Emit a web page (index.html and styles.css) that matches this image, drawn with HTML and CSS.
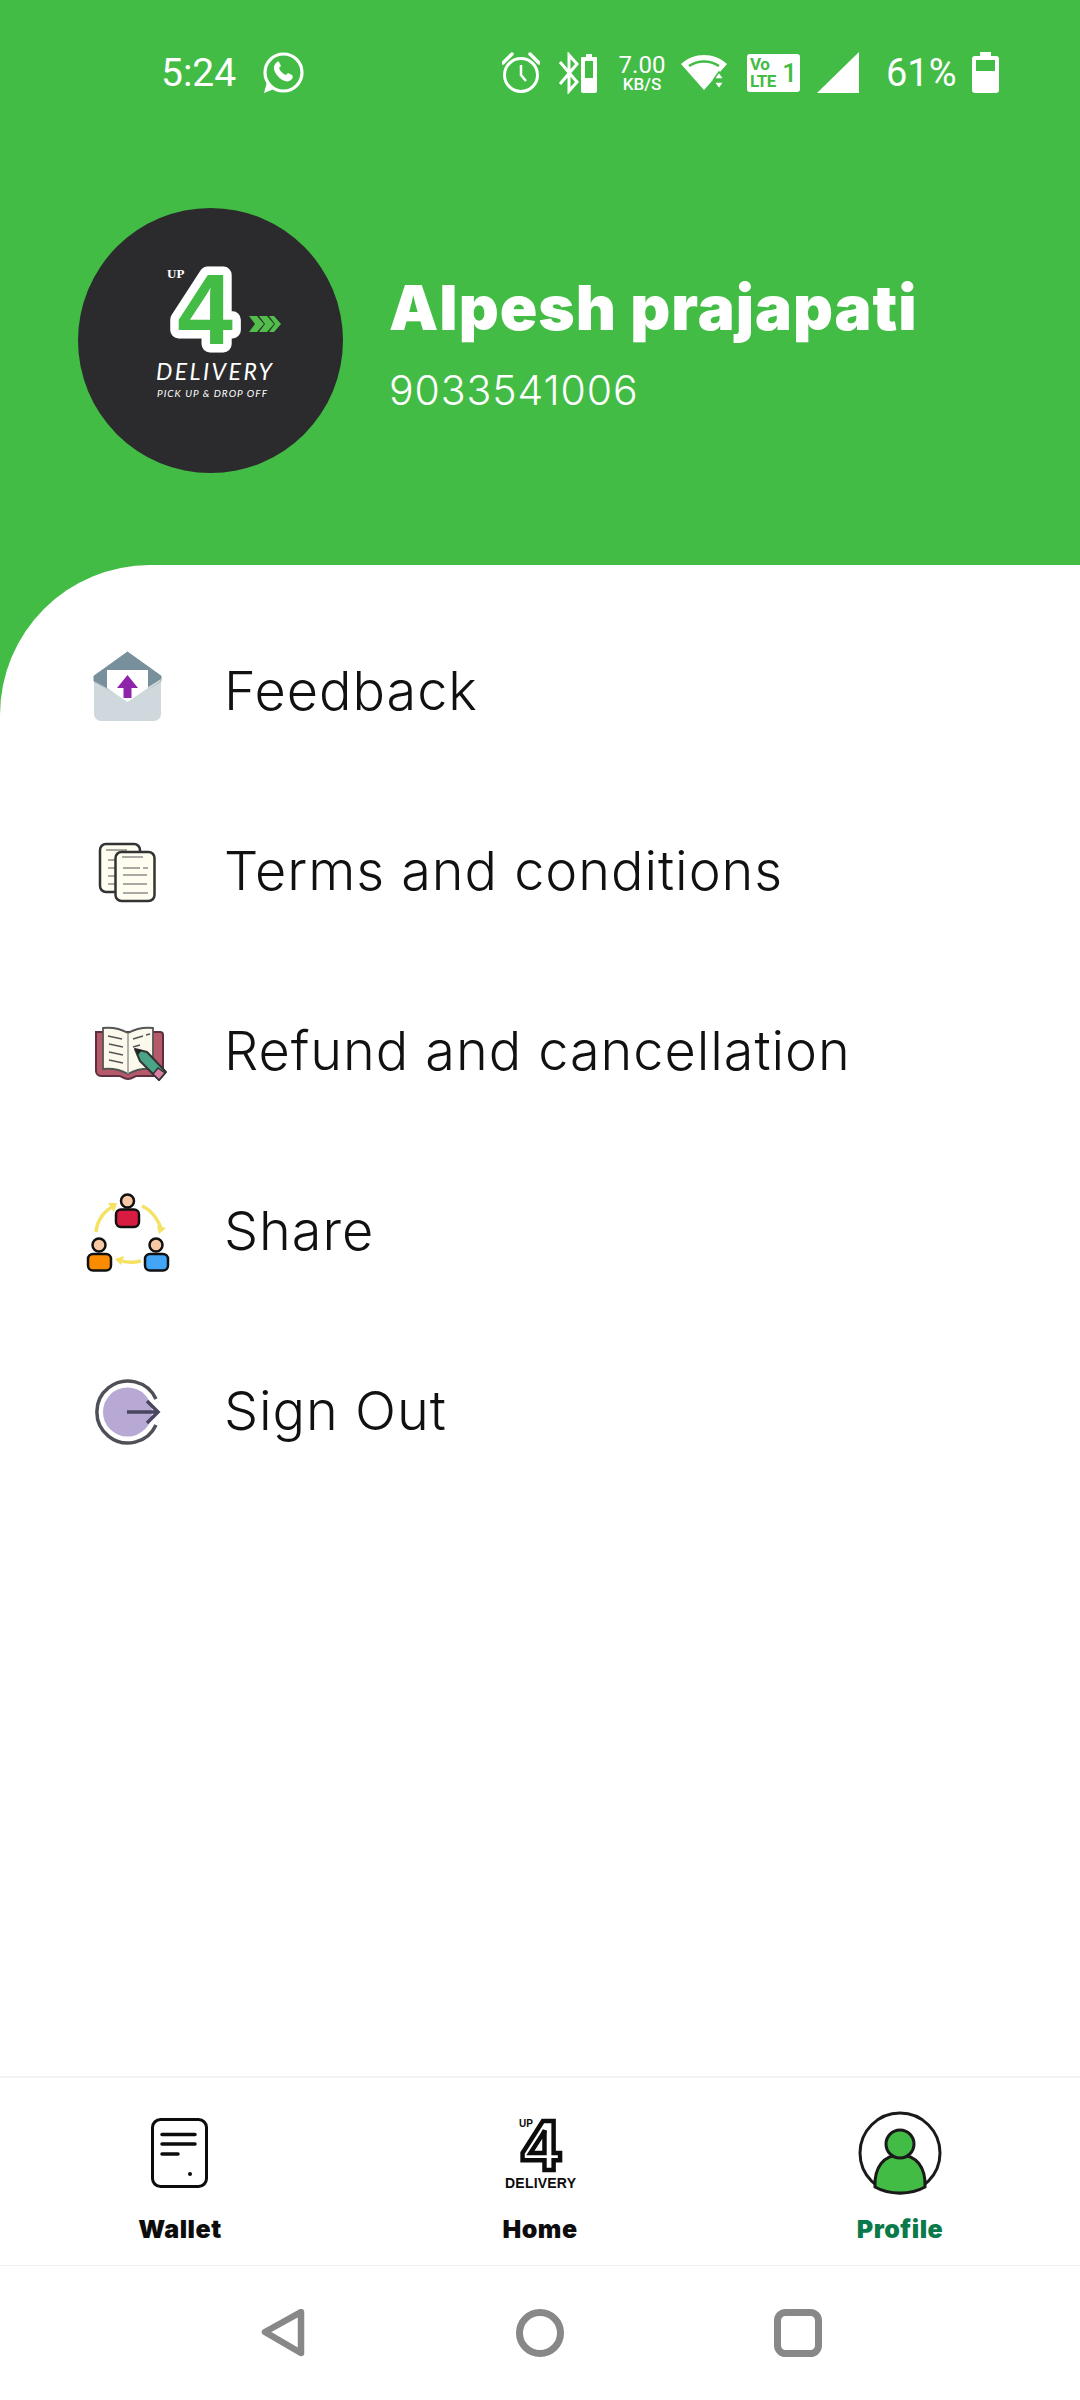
FILE: index.html
```html
<!DOCTYPE html>
<html lang="en">
<head>
<meta charset="utf-8">
<title>Profile</title>
<link rel="stylesheet" href="styles.css">
</head>
<body>
<div class="app">
  <header class="hero">
    <div class="status">
      <span class="time">5:24</span>
      <svg class="st-wa" viewBox="262 52 42 42"><circle cx="283.500" cy="72.500" r="18.500" fill="none" stroke="#fff" stroke-width="3.200"/><path d="M264 93l3-11 7 7z" fill="#fff"/><path d="M276 63c-2 2-3 5-1 9 2 4 6 8 10 9 3 1 5 0 7-2 1-2 1-3 0-4l-4-2-2 2c-3-1-6-4-7-7l2-2-2-4c-1-1-2 0-3 1z" fill="#fff"/></svg>
      <div class="status-right">
        <svg class="st-alarm" viewBox="502 52 38 42"><circle cx="521" cy="75" r="16.500" fill="none" stroke="#fff" stroke-width="3"/><path d="M521 65v10l5 6" fill="none" stroke="#fff" stroke-width="2.500"/><path d="M503 63l9-9M539 63l-9-9" stroke="#fff" stroke-width="3.500" stroke-linecap="round"/></svg>
        <svg class="st-bt" viewBox="558 52 39 42"><path d="M560 62l17 20-8 9V55l8 9-17 20" fill="none" stroke="#fff" stroke-width="3"/><path d="M586 54h6v3h4a1 1 0 0 1 1 1v33a2 2 0 0 1-2 2h-12a2 2 0 0 1-2-2V58a1 1 0 0 1 1-1h4z" fill="#fff"/><rect x="585" y="61" width="8" height="17" fill="#43BC45"/></svg>
        <div class="speed"><span class="speed-num">7.00</span><span class="speed-unit">KB/S</span></div>
        <svg class="st-wifi" viewBox="681 56 46 36"><path d="M681 65c13-12 33-12 46 0l-23 26z" fill="#fff"/><path d="M689 67c9-6 21-6 30 0" fill="none" stroke="#43BC45" stroke-width="2.500"/><path d="M719 73l-5 7h10zM719 90l-5-7h10z" fill="#fff" stroke="#43BC45" stroke-width="1.500"/></svg>
        <div class="volte"><div class="volte-text"><span>Vo</span><span>LTE</span></div><span class="volte-one">1</span></div>
        <svg class="st-signal" viewBox="817 52 42 42"><path d="M817 93L859 52v41z" fill="#fff"/></svg>
        <span class="pct">61%</span>
        <svg class="st-batt" viewBox="972 52 27 42"><path d="M980 52h11v4h5a3 3 0 0 1 3 3v31a3 3 0 0 1-3 3h-21a3 3 0 0 1-3-3V59a3 3 0 0 1 3-3h5z" fill="#fff"/><rect x="976" y="60" width="19" height="11" fill="#43BC45"/></svg>
      </div>
    </div>
    <div class="profile">
      <svg class="avatar" viewBox="78 208 265 265">
        <circle cx="210.500" cy="340.500" r="132.500" fill="#2b2b2d"/>
        <text class="logo-four" x="205" y="344" text-anchor="middle">4</text>
        <text class="logo-up" x="167" y="278">UP</text>
        <path d="M249 316l8 0 7 8-7 8-8 0 6-8zM259 316l8 0 7 8-7 8-8 0 6-8zM269 316l5 0 7 8-7 8-5 0 6-8z" fill="#52bd4b"/>
        <text class="logo-del" x="156" y="380" textLength="116">DELIVERY</text>
        <text class="logo-pick" x="157" y="397" textLength="110">PICK UP &amp; DROP OFF</text>
      </svg>
      <div class="who">
        <div class="name">Alpesh prajapati</div>
        <div class="phone">9033541006</div>
      </div>
    </div>
  </header>

  <main class="sheet">
    <div class="row">
      <svg class="row-icon" viewBox="86 648 84 84">
        <path d="M94 678v36a7 7 0 0 0 7 7h53a7 7 0 0 0 7-7v-36z" fill="#cfd8dc"/>
        <path d="M127.500 652L161 676v5l-33.500 21L94 681v-5z" fill="#78909c" stroke="#78909c" stroke-linejoin="round" stroke-width="1"/>
        <path d="M94 681l33.500 23L161 681v-2l-33.500 21z" fill="#cfd8dc"/>
        <path d="M107 670h41v18l-20.500 14L107 688z" fill="#fff"/>
        <path d="M127.500 675l-10.500 13h6.500v10h8v-10h6.500z" fill="#8e24aa"/>
      </svg>
      <span class="row-label">Feedback</span>
    </div>
    <div class="row">
      <svg class="row-icon" viewBox="86 828 84 84">
        <rect x="100" y="844" width="40" height="48" rx="6" fill="#fffdf0" stroke="#333" stroke-width="2.500"/>
        <path d="M106 850h21M108 860h14M108 868h14M108 876h14M108 884h8" stroke="#555" stroke-width="1.200"/>
        <rect x="115.500" y="852" width="39" height="49" rx="6" fill="#fffdf0" stroke="#333" stroke-width="2.500"/>
        <path d="M122 857h21M123 868h17M143 868h5M123 875h24M123 884h24M123 893h25" stroke="#555" stroke-width="1.200"/>
      </svg>
      <span class="row-label">Terms and conditions</span>
    </div>
    <div class="row">
      <svg class="row-icon" viewBox="86 1008 84 84">
        <path d="M96 1032h64a3 3 0 0 1 3 3v37a4 4 0 0 1-4 4h-22c-3 0-4 3-9 3s-6-3-9-3H101a5 5 0 0 1-5-5z" fill="#b5596b" stroke="#5d3040" stroke-width="2"/>
        <path d="M103 1028c10-1 18 1 25 5 7-4 15-6 25-5v41c-10-1-18 1-25 5-7-4-15-6-25-5z" fill="#fbf8ec" stroke="#555" stroke-width="1.800"/>
        <path d="M128 1033v41" stroke="#999" stroke-width="1.500"/>
        <path d="M108 1036l14 3M109 1044l14 3M109 1052l14 3M109 1060l14 3M133 1039l10-3M146 1035l4-1M133 1047l7-2" stroke="#555" stroke-width="1.500"/>
        <path d="M135 1049l12 3 19 20-7 8-19-19z" fill="#4aa586" stroke="#333" stroke-width="2" stroke-linejoin="round"/>
        <path d="M135 1049l7 1-4 5z" fill="#222"/>
        <path d="M158 1068l7 5-6 7-6-6z" fill="#d681a4" stroke="#333" stroke-width="1.500"/>
      </svg>
      <span class="row-label">Refund and cancellation</span>
    </div>
    <div class="row">
      <svg class="row-icon" viewBox="86 1188 84 84">
        <path d="M96 1232c1-12 9-22 18-26M142 1206c9 4 16 13 20 25M141 1261c-8 2-15 2-22-1" fill="none" stroke="#f5e262" stroke-width="3.500"/>
        <path d="M108 1203l9 0-3 9zM157 1226l9 2-7 6zM124 1256l-3 9-6-6z" fill="#f5e262"/>
        <rect x="116" y="1209.500" width="23" height="17.500" rx="5" fill="#d81b40" stroke="#111" stroke-width="2.500"/>
        <circle cx="127.500" cy="1201" r="6.500" fill="#f9c9a6" stroke="#111" stroke-width="2.500"/>
        <rect x="88" y="1254" width="23" height="16.500" rx="5" fill="#fb8c00" stroke="#111" stroke-width="2.500"/>
        <circle cx="99" cy="1245" r="6.500" fill="#f9c9a6" stroke="#111" stroke-width="2.500"/>
        <rect x="145" y="1254" width="23" height="16.500" rx="5" fill="#42a5f5" stroke="#111" stroke-width="2.500"/>
        <circle cx="156" cy="1245" r="6.500" fill="#f9c9a6" stroke="#111" stroke-width="2.500"/>
      </svg>
      <span class="row-label">Share</span>
    </div>
    <div class="row">
      <svg class="row-icon" viewBox="86 1368 84 84">
        <circle cx="127.500" cy="1412" r="24.500" fill="#b8a8d4"/>
        <path d="M156 1399a31 31 0 1 0 0 26" fill="none" stroke="#4f4f57" stroke-width="3.500"/>
        <path d="M127 1412h31M147 1401l11 11-11 11" fill="none" stroke="#4a4560" stroke-width="3.500"/>
      </svg>
      <span class="row-label">Sign Out</span>
    </div>
  </main>

  <nav class="tabs">
    <div class="tab">
      <svg class="tab-icon" viewBox="136 2110 90 86">
        <rect x="153.500" y="2119.500" width="54" height="67" rx="8" fill="none" stroke="#0c0c0c" stroke-width="3"/>
        <path d="M163 2134.500h33M163 2144h33M163 2154h16" stroke="#0c0c0c" stroke-width="3.500" stroke-linecap="round"/>
        <circle cx="191" cy="2174" r="2" fill="#0c0c0c"/>
      </svg>
      <span class="tab-label">Wallet</span>
    </div>
    <div class="tab">
      <svg class="tab-icon" viewBox="495 2110 90 86">
        <text class="home-four" x="541" y="2170" text-anchor="middle">4</text>
        <text class="home-up" x="519" y="2127" textLength="14">UP</text>
        <text class="home-del" x="505" y="2188" textLength="71">DELIVERY</text>
      </svg>
      <span class="tab-label">Home</span>
    </div>
    <div class="tab">
      <svg class="tab-icon" viewBox="855 2110 90 86">
        <circle cx="900" cy="2153" r="40" fill="#fff" stroke="#1a1a1a" stroke-width="3"/>
        <path d="M875 2187c-1-20 9-32 25-32s26 12 25 32c-7 4-16 6-25 6s-18-2-25-6z" fill="#43bc45" stroke="#1a1a1a" stroke-width="3"/>
        <circle cx="900" cy="2144" r="14" fill="#43bc45" stroke="#1a1a1a" stroke-width="3"/>
      </svg>
      <span class="tab-label tab-label-on">Profile</span>
    </div>
  </nav>

  <div class="sysnav">
    <svg class="sys-icon" viewBox="258 2310 48 48"><path d="M265 2333l36-20v41z" fill="none" stroke="#888" stroke-width="6.500" stroke-linejoin="round"/></svg>
    <svg class="sys-icon" viewBox="516 2310 48 48"><circle cx="540" cy="2334" r="20.500" fill="none" stroke="#888" stroke-width="7"/></svg>
    <svg class="sys-icon" viewBox="774 2310 48 48"><rect x="777.500" y="2313.500" width="41" height="41" rx="8" fill="none" stroke="#888" stroke-width="7"/></svg>
  </div>
</div>
</body>
</html>
```
FILE: styles.css
```css
* { box-sizing: border-box; }
html, body { margin: 0; padding: 0; }
body { background: #fff; font-family: "Inter", "Liberation Sans", sans-serif; }
.app { width: 1080px; height: 2400px; display: flex; flex-direction: column; background: #43bc45; overflow: hidden; }

.hero { height: 565px; flex: none; background: #43bc45; color: #fff; }
.status { height: 146px; display: flex; align-items: center; padding: 0 81px 0 161px; }
.time { font: 400 39px/42px "Roboto", sans-serif; width: 75px; white-space: nowrap; }
.st-wa { width: 42px; height: 42px; margin-left: 26px; }
.status-right { margin-left: auto; display: flex; align-items: center; }
.st-alarm { width: 38px; height: 42px; }
.st-bt { width: 39px; height: 42px; margin-left: 18px; }
.speed { width: 48px; margin-left: 21px; display: flex; flex-direction: column; align-items: center; font-family: "Roboto", sans-serif; color: #fff; }
.speed-num { font-size: 24px; line-height: 22px; font-weight: 400; }
.speed-unit { font-size: 17px; line-height: 16px; font-weight: 500; }
.st-wifi { width: 46px; height: 36px; margin-left: 15px; }
.volte { width: 53px; height: 38px; margin-left: 20px; background: #fff; border-radius: 3px; color: #43bc45; display: flex; align-items: center; justify-content: space-between; padding: 0 3px; font: 700 17px/17px "Roboto", sans-serif; }
.volte-text { display: flex; flex-direction: column; letter-spacing: -0.5px; }
.volte-one { font-size: 26px; line-height: 30px; font-weight: 500; }
.st-signal { width: 42px; height: 42px; margin-left: 17px; }
.pct { font: 400 38px/42px "Roboto", sans-serif; width: 70px; margin-left: 27px; white-space: nowrap; }
.st-batt { width: 27px; height: 42px; margin-left: 16px; }

.profile { display: flex; align-items: center; margin-top: 62px; padding-left: 78px; }
.avatar { width: 265px; height: 265px; flex: none; }
.who { margin-left: 46px; margin-top: 5px; display: flex; flex-direction: column; gap: 23px; }
.name { font-size: 62px; line-height: 70px; font-weight: 900; letter-spacing: 1px; white-space: nowrap; }
.phone { font-size: 41px; line-height: 48px; font-weight: 300; letter-spacing: 0.9px; white-space: nowrap; }

.logo-four { font: 700 100px "Liberation Sans", sans-serif; fill: #43bc45; stroke: #fff; stroke-width: 17px; paint-order: stroke; stroke-linejoin: round; }
.logo-up { font: 700 13px "Liberation Serif", serif; fill: #fff; }
.logo-del { font: italic 400 23px "Lato", sans-serif; fill: #fff; }
.logo-pick { font: italic 400 10px "Lato", sans-serif; fill: #fff; }

.sheet { flex: 1; background: #fff; border-top-left-radius: 150px; padding-top: 35px; }
.row { height: 180px; display: flex; align-items: center; padding-left: 86px; }
.row-icon { width: 84px; height: 84px; flex: none; }
.row-label { margin-left: 54px; margin-top: 2px; font-size: 54px; line-height: 64px; font-weight: 350; letter-spacing: 0.95px; color: #111; white-space: nowrap; }

.tabs { height: 190px; flex: none; background: #fff; border-top: 2px solid #f2f2f2; border-bottom: 1px solid #f2f2f2; display: grid; grid-template-columns: repeat(3, 360px); padding-top: 32px; }
.tab { display: flex; flex-direction: column; align-items: center; }
.tab-icon { width: 90px; height: 86px; overflow: visible; }
.tab-label { margin-top: 18px; font-size: 25px; line-height: 30px; font-weight: 900; letter-spacing: 0.5px; color: #0c0c0c; }
.tab-label-on { color: #0b7a4b; }
.home-four { font: 700 70px "Liberation Sans", sans-serif; fill: #fff; stroke: #0c0c0c; stroke-width: 4.5px; }
.home-up { font: 700 10px "Liberation Sans", sans-serif; fill: #0c0c0c; }
.home-del { font: 700 14px "Liberation Sans", sans-serif; fill: #0c0c0c; }

.sysnav { height: 134px; flex: none; background: #fff; display: flex; justify-content: center; align-items: center; gap: 210px; }
.sys-icon { width: 48px; height: 48px; }
```
